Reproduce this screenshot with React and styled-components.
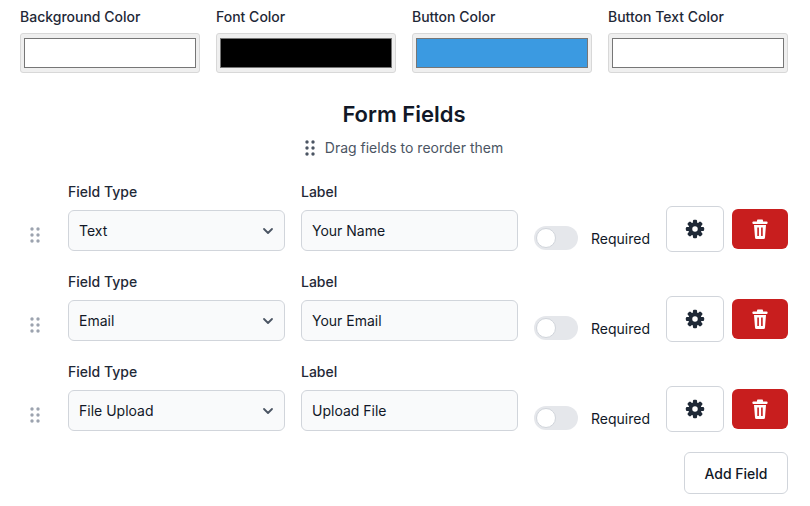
import React from "react";
import styled, { createGlobalStyle } from "styled-components";

const Global = createGlobalStyle`
  body { margin: 0; background: #fff; font-family: Inter, "Noto Sans", sans-serif; color: #1f2937; }
`;
const Page = styled.div`padding: 8px 22px 0 20px;`;
const Colors = styled.div`display: grid; grid-template-columns: repeat(4, 180px); gap: 16px;`;
const ColorCol = styled.div`display: flex; flex-direction: column; gap: 8px;`;
const SmallLabel = styled.div`font-size: 14px; color: #1f2937; line-height: 17px; font-weight: 500;`;
const Swatch = styled.div`
  height: 40px; box-sizing: border-box; border-radius: 3px; background: #efefef;
  border: 1px solid #d8d8d8; padding: 4px 3px;
  & > div { height: 100%; box-sizing: border-box; border: 1px solid #767676; background: ${p => p.$c}; }
`;
const Title = styled.h2`text-align: center; font-size: 22px; font-weight: 600; margin: 26px 0 0; line-height: 30px; color: #111827;`;
const Hint = styled.div`display: flex; justify-content: center; align-items: center; gap: 10px; font-size: 14px; color: #4b5563; margin-top: 10px; line-height: 18px;`;
const Rows = styled.div`margin-top: 18px; display: flex; flex-direction: column; gap: 14px;`;
const Row = styled.div`display: flex; align-items: flex-end; height: 76px;`;
const Handle = styled.div`width: 48px; display: flex; justify-content: flex-start; padding-left: 10px; box-sizing: border-box; align-self: flex-end; margin-bottom: 8px;`;
const Field = styled.div`display: flex; flex-direction: column; gap: 10px; width: 217px; margin-right: 16px;`;
const Box = styled.div`
  height: 41px; box-sizing: border-box; border: 1px solid #d1d5db; border-radius: 6px; background: #f9fafb;
  display: flex; align-items: center; justify-content: space-between; padding: 0 10px; font-size: 14px; color: #111827;
`;
const Toggle = styled.div`
  width: 44px; height: 24px; border-radius: 12px; background: #e5e7eb; position: relative; margin-bottom: 1px;
  &::after { content: ""; position: absolute; left: 2px; top: 2px; width: 20px; height: 20px; border-radius: 50%; background: #fff; border: 1px solid #d1d5db; box-sizing: border-box; }
`;
const Req = styled.div`font-size: 14px; color: #111827; margin: 0 0 3px 13px; line-height: 18px;`;
const Actions = styled.div`margin-left: auto; display: flex; gap: 8px; align-items: center; align-self: flex-end; margin-bottom: 0px;`;
const IconBtn = styled.div`
  box-sizing: border-box; display: flex; align-items: center; justify-content: center; border-radius: 6px;
  ${p => p.$danger ? "width:56px;height:40px;background:#c81e1e;margin-top:0;" : "width:58px;height:46px;border:1px solid #d1d5db;background:#fff;margin-bottom:-1px;"}
`;
const AddRow = styled.div`display: flex; justify-content: flex-end; margin-top: 21px;`;
const AddBtn = styled.div`
  width: 104px; height: 42px; box-sizing: border-box; border: 1px solid #d1d5db; border-radius: 6px;
  display: flex; align-items: center; justify-content: center; font-size: 14px; font-weight: 500; color: #111827;
`;

const Dots = ({ c = "#9ca3af" }) => (
  <svg width="10" height="16" viewBox="0 0 10 16">
    {[2, 8, 14].map(y => [2, 8].map(x => <circle key={x + "-" + y} cx={x} cy={y} r="1.7" fill={c} />))}
  </svg>
);
const Chevron = () => (
  <svg width="12" height="12" viewBox="0 0 12 12"><path d="M2 4l4 4 4-4" stroke="#4b5563" strokeWidth="1.8" fill="none" strokeLinecap="round" strokeLinejoin="round" /></svg>
);
const Gear = () => (
  <svg width="20" height="20" viewBox="0 0 24 24">
    <g fill="#1f2937">
      {[0, 45, 90, 135].map(a => <rect key={a} x="9.5" y="1" width="5" height="22" rx="1.5" transform={`rotate(${a} 12 12)`} />)}
      <circle cx="12" cy="12" r="8" />
    </g>
    <circle cx="12" cy="12" r="3.3" fill="#fff" />
  </svg>
);
const Trash = () => (
  <svg width="16" height="20" viewBox="0 0 16 20">
    <rect x="0.5" y="2.5" width="15" height="2.5" rx="0.8" fill="#fff" />
    <rect x="5" y="0.5" width="6" height="3" rx="0.8" fill="#fff" />
    <path d="M2 6h12l-1 12.5a1.5 1.5 0 0 1-1.5 1.5h-7A1.5 1.5 0 0 1 3 18.5z" fill="#fff" />
    <rect x="5.3" y="8.5" width="1.6" height="8.5" fill="#c81e1e" />
    <rect x="9.1" y="8.5" width="1.6" height="8.5" fill="#c81e1e" />
  </svg>
);

const fields = [["Text", "Your Name"], ["Email", "Your Email"], ["File Upload", "Upload File"]];
const colors = [["Background Color", "#ffffff"], ["Font Color", "#000000"], ["Button Color", "#3b9ae1"], ["Button Text Color", "#ffffff"]];

export default function App() {
  return (
    <Page>
      <Global />
      <Colors>
        {colors.map(([l, c]) => (
          <ColorCol key={l}><SmallLabel>{l}</SmallLabel><Swatch $c={c}><div /></Swatch></ColorCol>
        ))}
      </Colors>
      <Title>Form Fields</Title>
      <Hint><Dots c="#4b5563" />Drag fields to reorder them</Hint>
      <Rows>
        {fields.map(([t, l]) => (
          <Row key={t}>
            <Handle><Dots /></Handle>
            <Field><SmallLabel>Field Type</SmallLabel><Box>{t}<Chevron /></Box></Field>
            <Field><SmallLabel>Label</SmallLabel><Box>{l}</Box></Field>
            <Toggle />
            <Req>Required</Req>
            <Actions>
              <IconBtn><Gear /></IconBtn>
              <IconBtn $danger><Trash /></IconBtn>
            </Actions>
          </Row>
        ))}
      </Rows>
      <AddRow><AddBtn>Add Field</AddBtn></AddRow>
    </Page>
  );
}
